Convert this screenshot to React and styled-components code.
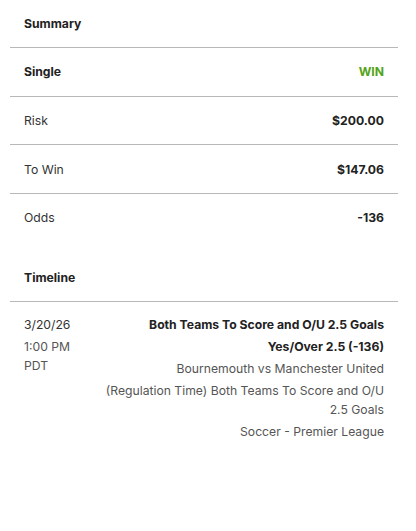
import React from 'react'
import styled, { createGlobalStyle } from 'styled-components';

const GlobalStyle = createGlobalStyle`
    body {
        margin: 0;
        background: #fff;
        font-family: Inter, "Noto Sans", sans-serif;
        -webkit-font-smoothing: antialiased;
    }
`;

const Page = styled.div`
    padding: 0 18px 0 10px;
`;

const Row = styled.div`
    display: flex;
    justify-content: space-between;
    align-items: center;
    height: ${props => props.top ? "47px" : "47.7px"};
    padding: 0 14px;
    border-bottom: ${props => props.line ? "1px solid #b8b8b8" : "none"};
    font-size: 12.2px;
`;

const Header = styled.div`
    font-weight: 700;
    color: #222;
`;

const Label = styled.div`
    color: #333;
`;

const Value = styled.div`
    font-weight: 700;
    color: ${props => props.green ? "#53a318" : "#222"};
`;

const Spacer = styled.div`
    height: 11.5px;
`;

const Timeline = styled.div`
    display: flex;
    justify-content: space-between;
    padding: 13px 14px 0;
    font-size: 12.2px;
`;

const When = styled.div`
    width: 56px;
    color: #555;
    line-height: 19px;
`;

const WhenLine = styled.div`
    margin-bottom: 3px;
    color: ${props => props.dark ? "#333" : "#555"};
`;

const Details = styled.div`
    flex: 1;
    text-align: right;
    line-height: 19px;
    padding-left: 22px;
`;

const Line = styled.div`
    margin-bottom: 3px;
    font-weight: ${props => props.bold ? 700 : 400};
    color: ${props => props.bold ? "#222" : "#555"};
`;

function App() {
    return (
        <Page>
            <GlobalStyle />
            <Row line top><Header>Summary</Header></Row>
            <Row line><Header>Single</Header><Value green>WIN</Value></Row>
            <Row line><Label>Risk</Label><Value>$200.00</Value></Row>
            <Row line><Label>To Win</Label><Value>$147.06</Value></Row>
            <Row><Label>Odds</Label><Value>-136</Value></Row>
            <Spacer />
            <Row line><Header>Timeline</Header></Row>
            <Timeline>
                <When>
                    <WhenLine dark>3/20/26</WhenLine>
                    <WhenLine>1:00 PM PDT</WhenLine>
                </When>
                <Details>
                    <Line bold>Both Teams To Score and O/U 2.5 Goals</Line>
                    <Line bold>Yes/Over 2.5 (-136)</Line>
                    <Line>Bournemouth vs Manchester United</Line>
                    <Line>(Regulation Time) Both Teams To Score and O/U 2.5 Goals</Line>
                    <Line>Soccer - Premier League</Line>
                </Details>
            </Timeline>
        </Page>
    )
}

export default App
